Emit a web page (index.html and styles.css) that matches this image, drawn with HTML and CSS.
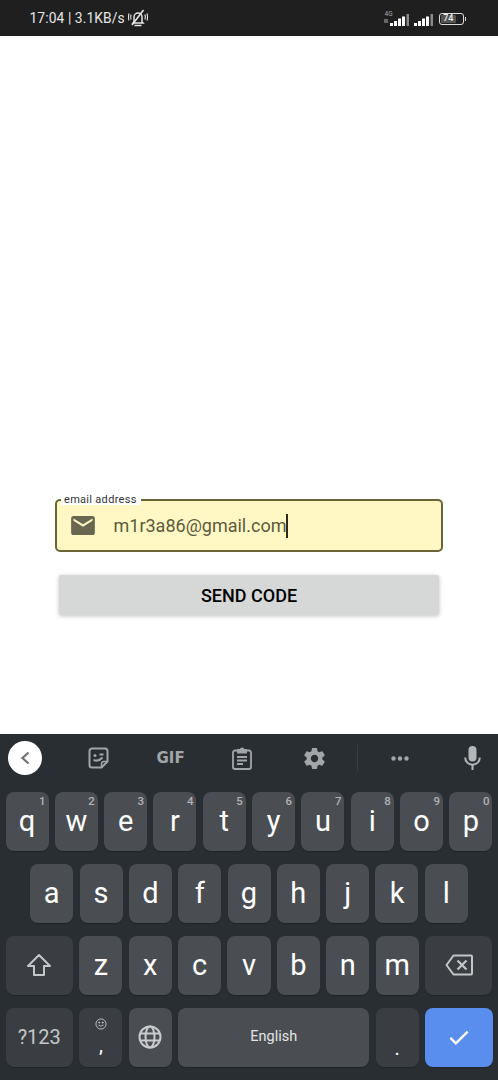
FILE: index.html
```html
<!DOCTYPE html>
<html>
<head>
    <title>Send Code</title>
    <link rel="stylesheet" href="styles.css">
</head>
<body>

<div class="phone">
    <div class="status-bar">
        <div class="status-left">
            <span>17:04 | 3.1KB/s</span>
            <svg class="bell-off" width="20" height="18" viewBox="0 0 20 18" fill="none" stroke="#e6e6e6" stroke-width="1.500">
                <path d="M6 13V8a4 4 0 0 1 8 0v5l1 1H5z"/>
                <path d="M6.500 16.500h7"/>
                <path d="M4 16L15.500 1" stroke-width="1.600"/>
                <path d="M3.200 5.500Q2.200 8 3.200 10.500M1 4.500Q0 8 1 11.500M16.800 5.500Q17.800 8 16.800 10.500M19 4.500Q20 8 19 11.500" stroke-width="1.100"/>
            </svg>
        </div>
        <div class="status-right">
            <div class="net-tag">
                <span class="net-label">4G</span>
                <svg width="4" height="4" viewBox="0 0 4 4">
                    <rect width="4" height="4" fill="#666"/>
                </svg>
            </div>
            <svg class="signal" width="19" height="12" viewBox="0 0 19 12">
                <g fill="#fff">
                    <rect x="0" y="9" width="3" height="3"/>
                    <rect x="4" y="7" width="3" height="5"/>
                    <rect x="8" y="4.500" width="3" height="7.500"/>
                    <rect x="12" y="2.500" width="3" height="9.500"/>
                </g>
                <rect x="16.500" y="0" width="2.500" height="12" fill="#8a8a8a"/>
            </svg>
            <svg class="signal signal-second" width="19" height="12" viewBox="0 0 19 12">
                <g fill="#fff">
                    <rect x="0" y="9" width="3" height="3"/>
                    <rect x="4" y="7" width="3" height="5"/>
                    <rect x="8" y="4.500" width="3" height="7.500"/>
                    <rect x="12" y="2.500" width="3" height="9.500"/>
                </g>
                <rect x="16.500" y="0" width="2.500" height="12" fill="#8a8a8a"/>
            </svg>
            <div class="battery"><span class="battery-level">74</span></div>
            <span class="battery-nub"></span>
        </div>
    </div>

    <div class="content">
        <div class="email-field">
            <span class="email-label">email address</span>
            <svg class="mail-icon" width="24" height="19" viewBox="2 4 20 16">
                <path fill="#696750" d="M20 4H4c-1.100 0-2 .9-2 2v12c0 1.100.9 2 2 2h16c1.100 0 2-.9 2-2V6c0-1.100-.9-2-2-2zm0 4l-8 5-8-5V6l8 5 8-5v2z"/>
            </svg>
            <span class="email-value">m1r3a86@gmail.com</span><span class="caret"></span>
        </div>
        <button class="send-button">SEND CODE</button>
    </div>

    <div class="keyboard">
        <div class="toolbar">
            <div class="back-circle">
                <svg width="12" height="16" viewBox="0 0 12 16" fill="none" stroke="#6f7275" stroke-width="2.200">
                    <path d="M9.500 2.500L3.500 8l6 5.500"/>
                </svg>
            </div>
            <svg class="tool tool-sticker" width="21" height="22" viewBox="0 0 21 22" fill="none" stroke="#a3a6a8" stroke-width="2">
                <path d="M4 1.500h13a2.500 2.500 0 0 1 2.500 2.500v10.500l-6 6H4A2.500 2.500 0 0 1 1.500 18V4A2.500 2.500 0 0 1 4 1.500z"/>
                <path d="M13.500 20.500V17a2.500 2.500 0 0 1 2.500-2.500h3.500" stroke-width="1.500"/>
                <path d="M5.500 13q5 2 9-2.500" stroke-width="2"/>
                <circle cx="7" cy="8.500" r="1.500" fill="#a3a6a8" stroke="none"/>
                <path d="M11.500 7.500h4" stroke-width="2"/>
            </svg>
            <span class="gif-label">GIF</span>
            <svg class="tool tool-clipboard" width="20" height="23" viewBox="0 0 20 23" fill="none" stroke="#a3a6a8" stroke-width="1.800">
                <path d="M6 3.500H3a2 2 0 0 0-2 2V20a2 2 0 0 0 2 2h14a2 2 0 0 0 2-2V5.500a2 2 0 0 0-2-2h-3"/>
                <path d="M6 5.500V3h2.500a1.500 1.500 0 0 1 3 0H14v2.500z" fill="#a3a6a8"/>
                <path d="M5 10h10M5 13.500h10M5 17h6"/>
            </svg>
            <svg class="tool tool-gear" width="21" height="21" viewBox="2 2 20 20">
                <path fill="#a3a6a8" d="M19.430 12.980c.04-.32.070-.64.070-.98s-.03-.66-.07-.98l2.110-1.650c.19-.15.240-.42.120-.64l-2-3.460c-.12-.22-.39-.3-.61-.22l-2.490 1c-.52-.4-1.080-.73-1.690-.98l-.38-2.650C14.460 2.180 14.250 2 14 2h-4c-.25 0-.46.18-.49.42l-.38 2.650c-.61.25-1.170.59-1.690.98l-2.490-1c-.23-.09-.49 0-.61.22l-2 3.460c-.13.22-.07.49.12.640l2.110 1.650c-.04.32-.07.65-.07.98s.03.66.07.98l-2.110 1.650c-.19.15-.24.42-.12.64l2 3.460c.12.22.39.3.61.22l2.490-1c.52.4 1.080.73 1.690.98l.38 2.650c.03.24.24.42.49.42h4c.25 0 .46-.18.49-.42l.38-2.650c.61-.25 1.170-.59 1.690-.98l2.490 1c.23.09.49 0 .61-.22l2-3.460c.12-.22.07-.49-.12-.64l-2.110-1.650zM12 15.500c-1.930 0-3.500-1.570-3.500-3.500s1.570-3.500 3.500-3.500 3.500 1.570 3.500 3.500-1.570 3.500-3.500 3.500z"/>
            </svg>
            <span class="tool-divider"></span>
            <svg class="tool tool-dots" width="18" height="5" viewBox="0 0 18 5" fill="#a3a6a8">
                <circle cx="2.500" cy="2.500" r="2.200"/>
                <circle cx="9" cy="2.500" r="2.200"/>
                <circle cx="15.500" cy="2.500" r="2.200"/>
            </svg>
            <svg class="tool tool-mic" width="17" height="24" viewBox="0 0 17 24">
                <rect x="4.500" y="0" width="8" height="15.500" rx="4" fill="#b4b7b9"/>
                <path d="M1.200 11.500a7.300 7.300 0 0 0 14.600 0" fill="none" stroke="#b4b7b9" stroke-width="2"/>
                <rect x="7.500" y="18.500" width="2" height="5.500" fill="#b4b7b9"/>
            </svg>
        </div>

        <div class="key-row row-top">
            <div class="key">q<i class="hint">1</i></div>
            <div class="key">w<i class="hint">2</i></div>
            <div class="key">e<i class="hint">3</i></div>
            <div class="key">r<i class="hint">4</i></div>
            <div class="key">t<i class="hint">5</i></div>
            <div class="key">y<i class="hint">6</i></div>
            <div class="key">u<i class="hint">7</i></div>
            <div class="key">i<i class="hint">8</i></div>
            <div class="key">o<i class="hint">9</i></div>
            <div class="key">p<i class="hint">0</i></div>
        </div>
        <div class="key-row row-middle">
            <div class="key">a</div>
            <div class="key">s</div>
            <div class="key">d</div>
            <div class="key">f</div>
            <div class="key">g</div>
            <div class="key">h</div>
            <div class="key">j</div>
            <div class="key">k</div>
            <div class="key">l</div>
        </div>
        <div class="key-row row-shift">
            <div class="key key-dark">
                <svg width="26" height="24" viewBox="0 0 26 24" fill="none" stroke="#c4c6c8" stroke-width="2">
                    <path d="M13 2L2 13h6v9h10v-9h6z" stroke-linejoin="round"/>
                </svg>
            </div>
            <div class="key">z</div>
            <div class="key">x</div>
            <div class="key">c</div>
            <div class="key">v</div>
            <div class="key">b</div>
            <div class="key">n</div>
            <div class="key">m</div>
            <div class="key key-dark">
                <svg width="28" height="22" viewBox="0 0 28 22" fill="none" stroke="#c4c6c8" stroke-width="2">
                    <path d="M8.500 1.500H26a1 1 0 0 1 1 1v17a1 1 0 0 1-1 1H8.500L1.500 11z" stroke-linejoin="round"/>
                    <path d="M12.500 6.500l9 9M21.500 6.500l-9 9" stroke-width="2.200"/>
                </svg>
            </div>
        </div>
        <div class="key-row row-bottom">
            <div class="key key-dark key-symbols">?123</div>
            <div class="key key-dark key-comma">
                <svg width="12" height="12" viewBox="0 0 13 13" fill="none" stroke="#c4c6c8" stroke-width="1">
                    <circle cx="6.500" cy="6.500" r="5.500"/>
                    <path d="M3.800 7.500q2.700 2.800 5.400 0"/>
                    <circle cx="4.600" cy="5" r=".6" fill="#c4c6c8"/>
                    <circle cx="8.400" cy="5" r=".6" fill="#c4c6c8"/>
                </svg>
                <span class="comma">,</span>
            </div>
            <div class="key">
                <svg width="24" height="24" viewBox="0 0 24 24" fill="none" stroke="#c9cbcd" stroke-width="2">
                    <circle cx="12" cy="12" r="10.500"/>
                    <ellipse cx="12" cy="12" rx="4.500" ry="10.500"/>
                    <path d="M2.200 8.500h19.600M2.200 15.500h19.600"/>
                </svg>
            </div>
            <div class="key key-space">English</div>
            <div class="key key-dark key-period">.</div>
            <div class="key key-enter">
                <svg width="20" height="15" viewBox="0 0 22 16" fill="none" stroke="#fff" stroke-width="2.600">
                    <path d="M1.500 8.500l6 6L20.500 1.500"/>
                </svg>
            </div>
        </div>
    </div>
</div>

</body>
</html>
```

FILE: styles.css
```css
/* Phone screen, top to bottom */
html, body {
    margin: 0;
    padding: 0;
}
.phone {
    width: 498px;
    height: 1080px;
    display: flex;
    flex-direction: column;
    font-family: Roboto, sans-serif;
    background: #fff;
    overflow: hidden;
}

/* Status bar */
.status-bar {
    height: 36px;
    flex: none;
    display: flex;
    justify-content: space-between;
    align-items: center;
    padding: 0 32px 0 29.500px;
    background: #1f1f1f;
    color: #e6e6e6;
    box-sizing: border-box;
}
.status-left {
    display: flex;
    align-items: center;
    gap: 3px;
    font-size: 13.800px;
    letter-spacing: 0.1px;
}
.bell-off {
    margin-top: -1px;
}
.status-right {
    display: flex;
    align-items: center;
}
.net-tag {
    position: relative;
    width: 6px;
    height: 12px;
    margin-top: 3px;
}
.net-tag svg {
    position: absolute;
    left: 0;
    top: 5px;
}
.net-label {
    position: absolute;
    left: 1px;
    top: -3px;
    font-size: 6.500px;
    line-height: 7px;
    color: #aaa;
}
.signal {
    margin-top: 3px;
}
.signal-second {
    margin: 3px 6px 0 5px;
}
.battery {
    width: 25px;
    height: 12px;
    margin-top: 1px;
    border: 1.500px solid #ddd;
    border-radius: 3px;
    box-sizing: border-box;
    display: flex;
    align-items: center;
    padding: 1px;
}
.battery-level {
    width: 74%;
    height: 100%;
    background: #555;
    border-radius: 1px;
    color: #eee;
    font-size: 9px;
    font-weight: 500;
    line-height: 7px;
    text-align: center;
}
.battery-nub {
    width: 1.500px;
    height: 4px;
    margin: 1px 0 0 1px;
    background: #ddd;
}

/* Form */
.content {
    flex: 1;
    padding: 463px 55px 0 55px;
}
.email-field {
    position: relative;
    height: 53px;
    display: flex;
    align-items: center;
    padding-left: 14px;
    background: #fff8c4;
    border: 2px solid #6a6535;
    border-radius: 5px;
    box-sizing: border-box;
}
.email-label {
    position: absolute;
    left: 4px;
    top: -6px;
    padding: 0 4px 0 3px;
    background: #fff;
    font-size: 11px;
    line-height: 10px;
    letter-spacing: 0.3px;
    color: #333;
}
.mail-icon {
    flex: none;
}
.email-value {
    margin-left: 18.500px;
    font-size: 18px;
    color: #5c5a3d;
}
.caret {
    width: 1.500px;
    height: 24px;
    background: #2d2b14;
}
.send-button {
    display: block;
    width: 380px;
    height: 40px;
    margin: 23px 0 0 4px;
    border: none;
    border-radius: 2px;
    background: #d6d8d8;
    box-shadow: 0 1px 4px rgba(0,0,0,0.25);
    font-family: Roboto, sans-serif;
    font-size: 18px;
    font-weight: 500;
    color: #000;
}

/* Keyboard */
.keyboard {
    height: 346px;
    flex: none;
    padding: 0 5.500px;
    background: #292e33;
    box-sizing: border-box;
}
.toolbar {
    position: relative;
    height: 58px;
}
.back-circle {
    position: absolute;
    left: 2.500px;
    top: 7px;
    width: 34px;
    height: 34px;
    border-radius: 50%;
    background: #fff;
    display: flex;
    align-items: center;
    justify-content: center;
}
.tool {
    position: absolute;
}
.tool-sticker { left: 82px; top: 13px; }
.tool-clipboard { left: 226.500px; top: 13px; }
.tool-gear { left: 298px; top: 14px; }
.tool-dots { left: 385.500px; top: 22px; }
.tool-mic { left: 458px; top: 12px; }
.gif-label {
    position: absolute;
    left: 151px;
    top: 15px;
    font-family: "DejaVu Sans", sans-serif;
    font-size: 15px;
    line-height: 18px;
    font-weight: 700;
    color: #a3a6a8;
}
.tool-divider {
    position: absolute;
    left: 351px;
    top: 11px;
    width: 1px;
    height: 26px;
    background: #383d42;
}

.key-row {
    display: flex;
    gap: 6.330px;
    height: 58.500px;
    margin-bottom: 13.500px;
}
.row-middle {
    padding: 0 24.700px;
}
.key {
    position: relative;
    flex: 1 1 0;
    display: flex;
    align-items: center;
    justify-content: center;
    background: #4a4e52;
    border-radius: 8px;
    box-shadow: 0 1px 1px rgba(0,0,0,0.2);
    color: #fff;
    font-size: 29px;
    line-height: 1;
}
.key-dark {
    background: #3a3e42;
}
.row-shift .key-dark,
.key-symbols,
.key-enter {
    flex: 0 0 67.500px;
}
.key-comma {
    flex-direction: column;
    gap: 8px;
    padding-bottom: 2px;
    box-sizing: border-box;
}
.comma {
    height: 16px;
    font-size: 20px;
    line-height: 14px;
}
.key-symbols {
    font-size: 20px;
    color: #c4c6c8;
}
.key-space {
    flex: 0 0 191px;
    font-size: 14.500px;
    color: #e4e5e6;
}
.key-period {
    font-size: 20px;
    padding-top: 21px;
    box-sizing: border-box;
}
.key-enter {
    background: #5a8eee;
}
.hint {
    position: absolute;
    top: 2px;
    right: 3px;
    font-style: normal;
    font-size: 11.500px;
    font-weight: 500;
    line-height: 14px;
    color: #b0b3b5;
}
```
